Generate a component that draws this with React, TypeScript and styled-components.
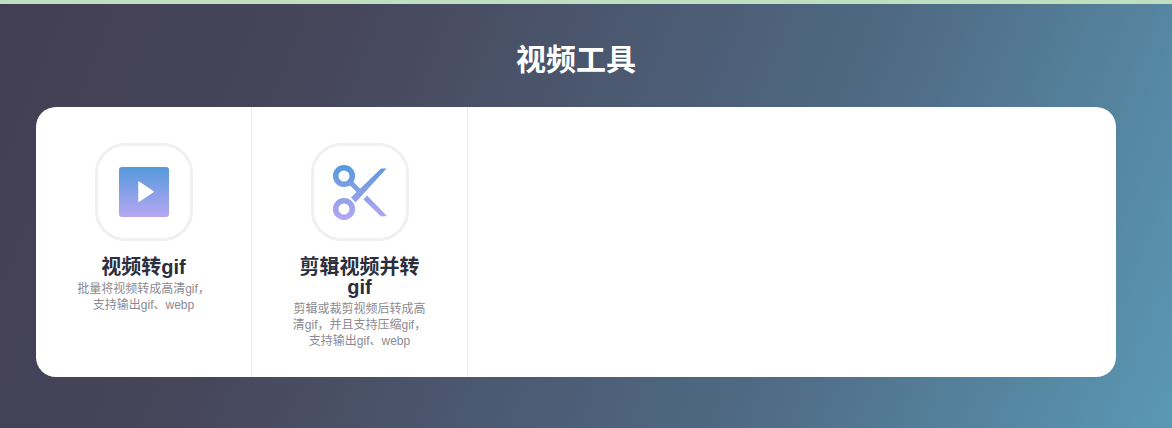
import React from 'react';
import styled, { createGlobalStyle } from 'styled-components';

const GlobalStyle = createGlobalStyle`
  html, body {
    margin: 0;
    padding: 0;
    height: 100%;
    overflow: hidden;
    font-family: "Liberation Sans", "Noto Sans CJK SC", sans-serif;
  }
`;

const TopBar = styled.div`
  height: 4px;
  background: #bfe0c0;
`;

const Section = styled.section`
  height: 424px;
  padding: 0 56px 0 36px;
  box-sizing: border-box;
  background: linear-gradient(112deg, #433f52 0%, #46455a 25%, #4f6a84 68%, #5a98b4 100%);
`;

const Title = styled.h2`
  margin: 0;
  padding: 35px 0 26px;
  font-size: 30px;
  line-height: 42px;
  font-weight: 700;
  color: #fff;
  text-align: center;
`;

const Panel = styled.div`
  display: flex;
  height: 270px;
  background: #fff;
  border-radius: 20px;
  overflow: hidden;
`;

const Tool = styled.a`
  width: 216px;
  box-sizing: border-box;
  padding-top: 36px;
  display: flex;
  flex-direction: column;
  align-items: center;
  border-right: 1px solid #eeeeee;
  text-decoration: none;
`;

const IconBox = styled.div`
  width: 98px;
  height: 98px;
  box-sizing: border-box;
  display: flex;
  align-items: center;
  justify-content: center;
  border: 3px solid #f0f0f0;
  border-radius: 30px;
`;

const ToolName = styled.h3`
  width: 136px;
  margin: 16px 0 0;
  font-size: 20px;
  line-height: 20px;
  font-weight: 700;
  color: #2b2e3d;
  text-align: center;
`;

const ToolDesc = styled.p`
  width: 136px;
  margin: 4px 0 0;
  font-size: 12px;
  line-height: 16px;
  color: #8a8a92;
  text-align: center;
`;

const PlayIcon = () => (
  <svg width="50" height="50" viewBox="0 0 50 50">
    <defs>
      <linearGradient id="playFill" x1="0" y1="0" x2="0" y2="1">
        <stop offset="0" stopColor="#5599dc" />
        <stop offset="1" stopColor="#b7a7f2" />
      </linearGradient>
    </defs>
    <rect x="0" y="0" width="50" height="50" rx="3" fill="url(#playFill)" />
    <path d="M19.8 14.8 L34.6 24.7 L19.8 34.6 Z" fill="#fff" stroke="#fff" strokeWidth="1" strokeLinejoin="round" />
  </svg>
);

const ScissorsIcon = () => (
  <svg width="56" height="56" viewBox="0 0 56 56">
    <defs>
      <linearGradient id="cutFill" gradientUnits="userSpaceOnUse" x1="0" y1="1" x2="0" y2="56">
        <stop offset="0" stopColor="#5599dc" />
        <stop offset="1" stopColor="#b7a7f2" />
      </linearGradient>
    </defs>
    <circle cx="12" cy="12" r="8.3" fill="none" stroke="url(#cutFill)" strokeWidth="5.6" />
    <circle cx="12" cy="45" r="8.3" fill="none" stroke="url(#cutFill)" strokeWidth="5.6" />
    <path d="M18 18 L29 29" fill="none" stroke="url(#cutFill)" strokeWidth="5" />
    <path d="M19 33.5 L49 4.4 L54.5 4.4 L23.5 38.5 Z" fill="url(#cutFill)" />
    <path d="M35 31.5 L31.5 35.5 L49 52.5 L55 52 Z" fill="url(#cutFill)" />
  </svg>
);

const App: React.FC = () => {
  return (
    <>
      <GlobalStyle />
      <TopBar />
      <Section>
        <Title>视频工具</Title>
        <Panel>
          <Tool>
            <IconBox>
              <PlayIcon />
            </IconBox>
            <ToolName>视频转gif</ToolName>
            <ToolDesc>批量将视频转成高清gif，支持输出gif、webp</ToolDesc>
          </Tool>
          <Tool>
            <IconBox>
              <ScissorsIcon />
            </IconBox>
            <ToolName>剪辑视频并转gif</ToolName>
            <ToolDesc>剪辑或裁剪视频后转成高清gif，并且支持压缩gif，支持输出gif、webp</ToolDesc>
          </Tool>
        </Panel>
      </Section>
    </>
  );
};

export default App;
